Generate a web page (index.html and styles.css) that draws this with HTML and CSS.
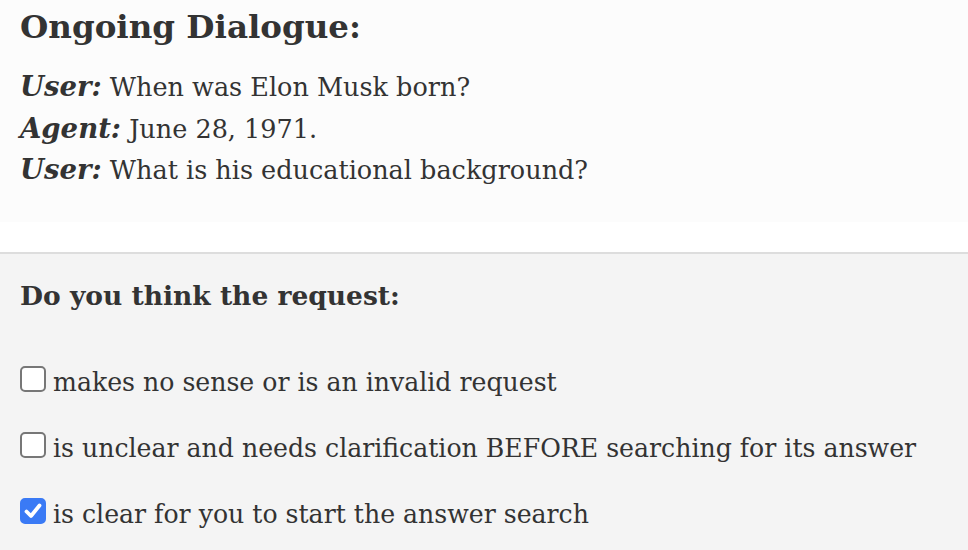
FILE: index.html
```html
<!DOCTYPE html>
<html lang="en">
<head>
<meta charset="utf-8">
<title>Ongoing Dialogue</title>
<link rel="stylesheet" href="styles.css">
</head>
<body>
<section class="dialogue">
  <h2 class="title">Ongoing Dialogue:</h2>
  <div class="turns">
    <p class="turn"><em class="who">User:</em> When was Elon Musk born?</p>
    <p class="turn"><em class="who">Agent:</em> June 28, 1971.</p>
    <p class="turn"><em class="who">User:</em> What is his educational background?</p>
  </div>
</section>
<div class="gap"></div>
<section class="survey">
  <h3 class="question">Do you think the request:</h3>
  <ul class="options">
    <li class="option">
      <span class="box"></span>
      <span class="label">makes no sense or is an invalid request</span>
    </li>
    <li class="option">
      <span class="box"></span>
      <span class="label">is unclear and needs clarification BEFORE searching for its answer</span>
    </li>
    <li class="option">
      <span class="box checked"><svg viewBox="0 0 26 26" width="26" height="26"><path d="M6.5 13.5 L11 18 L19.5 7.5" fill="none" stroke="#fff" stroke-width="3.8" stroke-linecap="round" stroke-linejoin="round"/></svg></span>
      <span class="label">is clear for you to start the answer search</span>
    </li>
  </ul>
</section>
</body>
</html>
```

FILE: styles.css
```css
* { box-sizing: border-box; }
html, body { margin: 0; padding: 0; }
body {
  font-family: "DejaVu Serif", "Liberation Serif", serif;
  color: #333;
  background: #f4f4f4;
  width: 968px;
  height: 550px;
  overflow: hidden;
}
.dialogue {
  background: #fcfcfc;
  height: 222px;
  padding: 0 20px;
  display: flex;
  flex-direction: column;
}
.title {
  font-size: 32.5px;
  font-weight: bold;
  margin: 0;
  line-height: 53px;
}
.turns {
  margin-top: 14px;
  display: flex;
  flex-direction: column;
}
.turn {
  margin: 0;
  font-size: 25.5px;
  line-height: 41.5px;
}
.who {
  font-weight: bold;
  font-style: italic;
  font-size: 1.08em;
  line-height: 1;
}
.gap {
  height: 30px;
  background: #fff;
}
.survey {
  border-top: 2px solid #ddd;
  background: #f4f4f4;
  padding: 20px 20px 0;
}
.question {
  margin: 0;
  font-size: 26.5px;
  font-weight: bold;
  line-height: 44px;
}
.options {
  list-style: none;
  margin: 48px 0 0;
  padding: 0;
  display: flex;
  flex-direction: column;
  gap: 32px;
}
.option {
  display: flex;
  align-items: flex-start;
  gap: 7px;
  font-size: 25.2px;
  line-height: 34px;
}
.box {
  width: 26px;
  height: 26px;
  border: 2px solid #777;
  border-radius: 5px;
  background: #fff;
  flex: none;
  display: flex;
}
.box.checked {
  background: #3a7af5;
  border-color: #3a7af5;
}
.box svg { margin: -2px; }
```
